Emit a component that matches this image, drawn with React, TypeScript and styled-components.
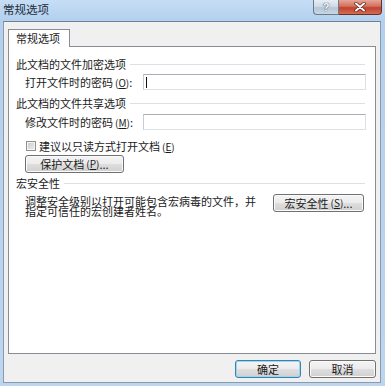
import React from 'react';
import styled, {createGlobalStyle, css} from 'styled-components';

const GlobalStyle = createGlobalStyle`
    html, body {
        margin: 0;
        padding: 0;
        background: #fff;
    }
    body {
        font-family: "Noto Sans CJK SC", "Noto Sans", sans-serif;
        font-size: 11px;
        color: #1a1a1a;
    }
`;

const Window = styled.div`
    width: 385px;
    height: 386px;
    box-sizing: border-box;
    display: flex;
    flex-direction: column;
    padding: 0 4px 3px 3px;
    background: linear-gradient(#c6def5, #b3d0ee 20px, #bcd6ef);
`;

const TitleBar = styled.div`
    height: 21px;
    flex: none;
    display: flex;
    align-items: flex-start;
    justify-content: space-between;
    margin-left: -3px;
    margin-right: -4px;
    padding-left: 3px;
    padding-right: 3px;
`;

const Title = styled.span`
    font-size: 11.5px;
    line-height: 18px;
    color: #1c2a3a;
`;

const CaptionButtons = styled.div`
    display: flex;
    height: 15px;
`;

const CaptionButton = styled.div<{ $close?: boolean }>`
    height: 15px;
    display: flex;
    align-items: center;
    justify-content: center;
    box-sizing: border-box;
    border: 1px solid #6c7a8c;
    border-top: none;
    ${p => p.$close ? css`
        width: 43px;
        border-left: none;
        border-color: #6b2f2a;
        border-radius: 0 0 4px 0;
        background: linear-gradient(#e7a596, #d1705e 45%, #c0412f 55%, #d76b4f);
    ` : css`
        width: 26px;
        border-radius: 0 0 0 4px;
        background: linear-gradient(#e6edf4, #cfdbe7 45%, #b6c6d6 55%, #c9d6e3);
        color: #fff;
        font-family: "Liberation Sans", sans-serif;
        font-weight: bold;
        font-size: 11px;
        text-shadow: 0 0 1px #33475e, 0 0 1px #33475e;
    `}
`;

const Client = styled.div`
    flex: 1;
    display: flex;
    flex-direction: column;
    background: #f0f0f0;
    border: 1px solid #8a9bae;
    border-top-color: #6f8299;
    padding: 7px 4px 0 4px;
`;

const TabStrip = styled.div`
    display: flex;
    position: relative;
    z-index: 1;
    margin-bottom: -1px;
`;

const Tab = styled.div`
    width: 62px;
    height: 18px;
    box-sizing: border-box;
    border: 1px solid #898c95;
    border-bottom: none;
    background: #fff;
    padding-left: 7px;
    line-height: 17px;
    font-size: 11px;
`;

const Panel = styled.div`
    height: 308px;
    box-sizing: border-box;
    border: 1px solid #898c95;
    background: #fff;
    padding: 10px 9px 0 7px;
    display: flex;
    flex-direction: column;
`;

const Heading = styled.div<{ $gap: number }>`
    display: flex;
    align-items: center;
    gap: 4px;
    height: 14px;
    margin-top: ${p => p.$gap}px;
    padding-right: 1px;

    &::after {
        content: '';
        flex: 1;
        height: 1px;
        background: #dcdfe3;
    }
`;

const FieldRow = styled.div<{ $gap: number }>`
    display: flex;
    align-items: center;
    height: 16px;
    margin-top: ${p => p.$gap}px;
    padding-left: 9px;
`;

const FieldLabel = styled.span`
    width: 118px;
    flex: none;
`;

const Mnemonic = styled.span`
    font-size: 10px;
    margin-left: 2px;

    u {
        text-underline-offset: 1px;
    }
`;

const TextBox = styled.div`
    flex: 1;
    height: 16px;
    box-sizing: border-box;
    border: 1px solid #dbdfe6;
    border-top-color: #abadb3;
    border-left-color: #c8ccd3;
    display: flex;
    align-items: center;
    padding-left: 2px;
`;

const Caret = styled.span`
    width: 1px;
    height: 11px;
    background: #111;
`;

const CheckRow = styled.label`
    display: flex;
    align-items: center;
    gap: 3px;
    height: 14px;
    margin-top: 9px;
    padding-left: 10px;
`;

const CheckBox = styled.span`
    width: 10px;
    height: 10px;
    box-sizing: border-box;
    border: 1px solid #8f8f8f;
    background: linear-gradient(135deg, #c9c9c9, #eeeeee);
    box-shadow: inset 0 0 0 1px #f4f4f4;
`;

const Button = styled.button<{ $width: number; $default?: boolean }>`
    width: ${p => p.$width}px;
    height: 18px;
    flex: none;
    padding: 0;
    font: inherit;
    font-size: 11px;
    color: #1a1a1a;
    border: 1px solid #707070;
    border-radius: 3px;
    background: linear-gradient(#f4f4f4, #ececec 48%, #dedede 52%, #d0d0d0);
    box-shadow: inset 0 0 0 1px #fbfbfb;
    display: flex;
    align-items: center;
    justify-content: center;
    line-height: 16px;

    ${p => p.$default && css`
        border-color: #3c7fb1;
        box-shadow: inset 0 0 0 1px #98d8f2;
    `}
`;

const ProtectButton = styled(Button)`
    margin-top: 2px;
    margin-left: 9px;
`;

const MacroRow = styled.div`
    display: flex;
    justify-content: space-between;
    align-items: flex-start;
    margin-top: 4px;
    padding-left: 9px;
    padding-right: 2px;
`;

const MacroText = styled.p`
    margin: 2px 0 0;
    width: 236px;
    line-height: 10px;
    font-size: 11px;
`;

const Footer = styled.div`
    display: flex;
    justify-content: flex-end;
    gap: 8px;
    margin-top: 6px;
`;

function CloseGlyph() {
    return (
        <svg width='12' height='10' viewBox='0 0 12 10'>
            <path d='M2 1.5 L10 8.5 M10 1.5 L2 8.5' stroke='#5a1c14' strokeWidth='3.4' strokeLinecap='round' />
            <path d='M2 1.5 L10 8.5 M10 1.5 L2 8.5' stroke='#fff' strokeWidth='2' strokeLinecap='round' />
        </svg>
    );
}

function Label({text, mnemonic}: { text: string, mnemonic: string }) {
    return (
        <>
            {text}
            <Mnemonic>(<u>{mnemonic}</u>)</Mnemonic>
        </>
    );
}

export default function App() {
    return (
        <>
            <GlobalStyle />
            <Window>
                <TitleBar>
                    <Title>常规选项</Title>
                    <CaptionButtons>
                        <CaptionButton>?</CaptionButton>
                        <CaptionButton $close>
                            <CloseGlyph />
                        </CaptionButton>
                    </CaptionButtons>
                </TitleBar>
                <Client>
                    <TabStrip>
                        <Tab>常规选项</Tab>
                    </TabStrip>
                    <Panel>
                        <Heading $gap={0}>此文档的文件加密选项</Heading>
                        <FieldRow $gap={3}>
                            <FieldLabel>
                                <Label text='打开文件时的密码' mnemonic='O' />:
                            </FieldLabel>
                            <TextBox>
                                <Caret />
                            </TextBox>
                        </FieldRow>

                        <Heading $gap={6}>此文档的文件共享选项</Heading>
                        <FieldRow $gap={4}>
                            <FieldLabel>
                                <Label text='修改文件时的密码' mnemonic='M' />:
                            </FieldLabel>
                            <TextBox />
                        </FieldRow>

                        <CheckRow>
                            <CheckBox />
                            <span><Label text='建议以只读方式打开文档' mnemonic='E' /></span>
                        </CheckRow>
                        <ProtectButton type='button' $width={99}>
                            <Label text='保护文档' mnemonic='P' />...
                        </ProtectButton>

                        <Heading $gap={3}>宏安全性</Heading>
                        <MacroRow>
                            <MacroText>调整安全级别以打开可能包含宏病毒的文件，并指定可信任的宏创建者姓名。</MacroText>
                            <Button type='button' $width={91}>
                                <Label text='宏安全性' mnemonic='S' />...
                            </Button>
                        </MacroRow>
                    </Panel>
                    <Footer>
                        <Button type='button' $width={66} $default>确定</Button>
                        <Button type='button' $width={67}>取消</Button>
                    </Footer>
                </Client>
            </Window>
        </>
    );
}
